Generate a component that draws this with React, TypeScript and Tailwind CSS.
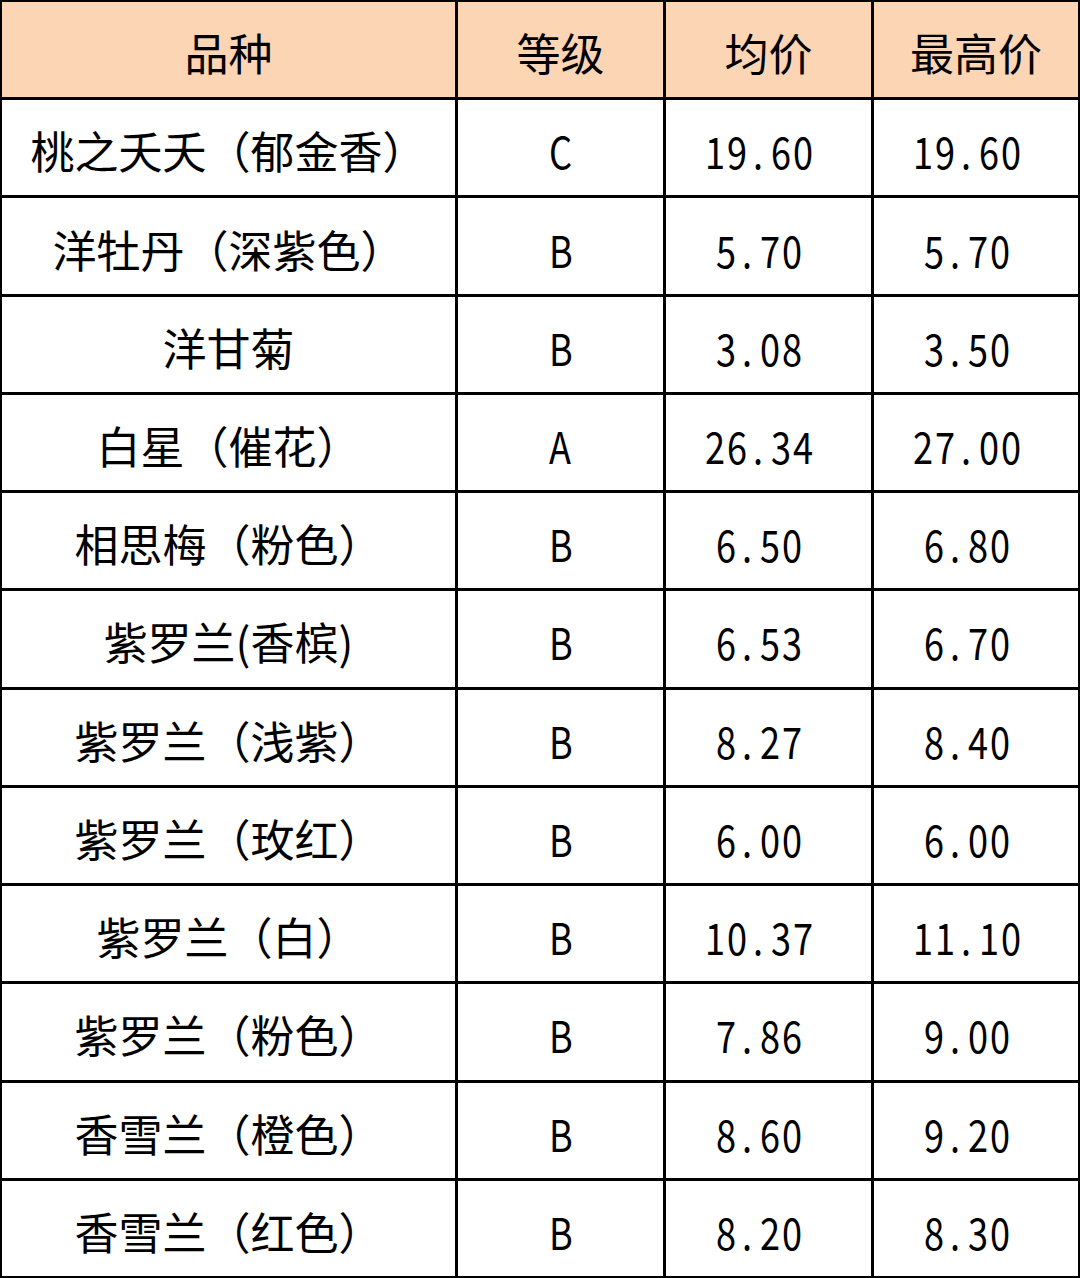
const rows: [string, string, string, string][] = [
  ["桃之夭夭（郁金香）", "C", "19.60", "19.60"],
  ["洋牡丹（深紫色）", "B", "5.70", "5.70"],
  ["洋甘菊", "B", "3.08", "3.50"],
  ["白星（催花）", "A", "26.34", "27.00"],
  ["相思梅（粉色）", "B", "6.50", "6.80"],
  ["紫罗兰(香槟)", "B", "6.53", "6.70"],
  ["紫罗兰（浅紫）", "B", "8.27", "8.40"],
  ["紫罗兰（玫红）", "B", "6.00", "6.00"],
  ["紫罗兰（白）", "B", "10.37", "11.10"],
  ["紫罗兰（粉色）", "B", "7.86", "9.00"],
  ["香雪兰（橙色）", "B", "8.60", "9.20"],
  ["香雪兰（红色）", "B", "8.20", "8.30"],
];

// digits in the source are narrow half-width monospace, the dot takes a full slot
function Mono({ text }: { text: string }) {
  return (
    <span className="inline-flex">
      {text.split("").map((c, i) => (
        <span key={i} className="inline-block w-[22px] text-center scale-x-[0.82]">
          {c}
        </span>
      ))}
    </span>
  );
}

function Cell({ children, head, className = "" }: { children: React.ReactNode; head?: boolean; className?: string }) {
  return (
    <div
      className={`flex items-center justify-center pt-[5px] ${
        head ? "bg-[#fcd5b4]" : "bg-white"
      } ${className}`}
    >
      {children}
    </div>
  );
}

export default function App() {
  return (
    <div
      className="w-[1080px] h-[1278px] bg-black p-[2px] text-[44px] leading-none text-black"
      style={{ fontFamily: '"Noto Sans CJK SC", "Noto Sans", sans-serif' }}
    >
      <div className="grid h-full grid-cols-[453px_205px_205px_1fr] grid-rows-[repeat(13,minmax(0,1fr))] gap-[3px]">
        <Cell head>品种</Cell>
        <Cell head>等级</Cell>
        <Cell head>均价</Cell>
        <Cell head>最高价</Cell>
        {rows.map(([name, grade, avg, max]) => (
          <div key={name} className="contents">
            <Cell>{name}</Cell>
            <Cell className="pr-[6px]">
              <Mono text={grade} />
            </Cell>
            <Cell className="pr-[21px]">
              <Mono text={avg} />
            </Cell>
            <Cell className="pr-[21px]">
              <Mono text={max} />
            </Cell>
          </div>
        ))}
      </div>
    </div>
  );
}
